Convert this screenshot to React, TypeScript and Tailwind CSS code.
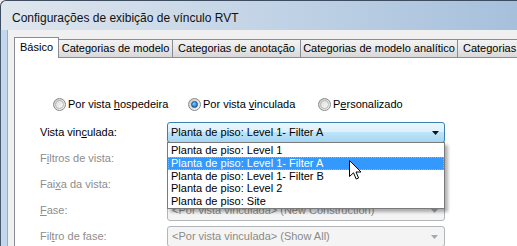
import React from "react";

function Radio({ checked }: { checked?: boolean }) {
  return (
    <span className="w-[13px] h-[13px] rounded-full border border-[#8a8a8a] bg-gradient-to-br from-[#c9c9c9] to-[#f7f7f7] flex items-center justify-center shrink-0">
      {checked ? (
        <span className="w-[7px] h-[7px] rounded-full border border-[#1c4f86] bg-[radial-gradient(circle_at_40%_35%,#8fd0ff_0%,#2f8ad8_55%,#1b5fa5_100%)]" />
      ) : (
        <span className="w-[9px] h-[9px] rounded-full border border-[#b9b9b9] bg-gradient-to-br from-[#dcdcdc] to-[#fafafa]" />
      )}
    </span>
  );
}

function Arrow({ color }: { color: string }) {
  return (
    <svg width="7" height="4" viewBox="0 0 7 4" className="shrink-0">
      <path d="M0 0 H7 L3.5 4 Z" fill={color} />
    </svg>
  );
}

function DisabledCombo({ text }: { text?: string }) {
  return (
    <div className="w-[278px] h-[21px] rounded-[3px] border border-[#b3b6b9] bg-[#f4f4f4] flex items-center pl-[4px] pr-[6px] text-[#8a8a8a]">
      <span className="flex-1 whitespace-nowrap">{text}</span>
      <Arrow color="#a8a8a8" />
    </div>
  );
}

export default function App() {
  const items = [
    "Planta de piso: Level 1",
    "Planta de piso: Level 1- Filter A",
    "Planta de piso: Level 1- Filter B",
    "Planta de piso: Level 2",
    "Planta de piso: Site",
  ];
  return (
    <div className="w-[517px] h-[246px] overflow-hidden relative flex flex-col bg-[#f0f0f0] font-['Liberation_Sans',Arial,sans-serif] text-[11px] text-black leading-none">
      {/* Title bar */}
      <div className="h-[30px] shrink-0 border-t border-l border-[#3d4c5e] rounded-tl-[6px] bg-gradient-to-r from-[#dfe6ee] via-[#c3d4e6] to-[#a6c0dc] flex items-center pl-[11px] pt-[4px]">
        <span className="text-[12px] text-[#111] whitespace-nowrap">
          Configurações de exibição de vínculo RVT
        </span>
      </div>
      <div className="flex flex-1 min-h-0">
        {/* left frame */}
        <div className="w-[8px] shrink-0 flex">
          <div className="w-[1px] bg-[#4a5a6e]" />
          <div className="w-[6px] bg-[#c2d7ec]" />
          <div className="w-[1px] bg-[#a7a9ac]" />
        </div>
        {/* client */}
        <div className="flex-1 flex flex-col pl-[6px] pt-[7px] bg-[#f0f0f0] min-w-0">
          {/* tabs */}
          <div className="flex items-end h-[21px] shrink-0 relative z-10 whitespace-nowrap">
            <div className="w-[45px] h-[21px] border border-b-0 border-[#898c95] bg-white flex items-center justify-center pb-[1px] shrink-0">
              Básico
            </div>
            <div className="w-[114px] h-[18px] border-t border-r border-[#898c95] bg-gradient-to-b from-[#f3f3f3] via-[#e8e8e8] to-[#d8d8d8] flex items-center justify-center shrink-0 mb-[1px]">
              Categorias de modelo
            </div>
            <div className="w-[128px] h-[18px] border-t border-r border-[#898c95] bg-gradient-to-b from-[#f3f3f3] via-[#e8e8e8] to-[#d8d8d8] flex items-center justify-center shrink-0 mb-[1px]">
              Categorias de anotação
            </div>
            <div className="w-[157px] h-[18px] border-t border-r border-[#898c95] bg-gradient-to-b from-[#f3f3f3] via-[#e8e8e8] to-[#d8d8d8] flex items-center justify-center shrink-0 mb-[1px]">
              Categorias de modelo analítico
            </div>
            <div className="w-[80px] h-[18px] border-t border-[#898c95] bg-gradient-to-b from-[#f3f3f3] via-[#e8e8e8] to-[#d8d8d8] flex items-center pl-[5px] shrink-0 mb-[1px]">
              Categorias
            </div>
          </div>
          {/* panel */}
          <div className="flex-1 -mt-[1px] border-t border-l border-[#898c95] bg-white pl-[25px] pt-[40px] flex flex-col relative whitespace-nowrap">
            {/* radios */}
            <div className="flex items-center h-[13px] pl-[13px]">
              <div className="w-[135px] flex items-center gap-[2px]">
                <Radio />
                <span>
                  Por vista <span className="underline">h</span>ospedeira
                </span>
              </div>
              <div className="w-[130px] flex items-center gap-[2px]">
                <Radio checked />
                <span>
                  Por vista <span className="underline">v</span>inculada
                </span>
              </div>
              <div className="flex items-center gap-[2px]">
                <Radio />
                <span>
                  P<span className="underline">e</span>rsonalizado
                </span>
              </div>
            </div>
            {/* rows */}
            <div className="flex flex-col gap-[5px] mt-[11px]">
              <div className="flex items-center h-[21px]">
                <span className="w-[127px]">
                  Vista vin<span className="underline">c</span>ulada:
                </span>
                <div className="w-[278px] h-[21px] rounded-[3px] border border-[#3c7fb1] bg-[linear-gradient(to_bottom,#ecf7fd_0%,#dcf0fb_45%,#bde4f8_50%,#a5d6f3_100%)] flex items-center pl-[3px] pr-[5px]">
                  <span className="flex-1">Planta de piso: Level 1- Filter A</span>
                  <Arrow color="#111" />
                </div>
              </div>
              <div className="flex items-center h-[21px] text-[#8d8d8d]">
                <span className="w-[127px]">
                  F<span className="underline">i</span>ltros de vista:
                </span>
                <DisabledCombo />
              </div>
              <div className="flex items-center h-[21px] text-[#8d8d8d]">
                <span className="w-[127px]">
                  Fai<span className="underline">x</span>a da vista:
                </span>
                <DisabledCombo />
              </div>
              <div className="flex items-center h-[21px] text-[#8d8d8d]">
                <span className="w-[127px]">
                  <span className="underline">F</span>ase:
                </span>
                <DisabledCombo text="<Por vista vinculada> (New Construction)" />
              </div>
              <div className="flex items-center h-[21px] text-[#8d8d8d]">
                <span className="w-[127px]">
                  Fil<span className="underline">t</span>ro de fase:
                </span>
                <DisabledCombo text="<Por vista vinculada> (Show All)" />
              </div>
            </div>
          </div>
        </div>
      </div>

      {/* dropdown list overlay */}
      <div className="absolute left-[167px] top-[142px] w-[278px] h-[67px] bg-white border border-[#7a7a7a] shadow-[3px_3px_3px_rgba(0,0,0,0.3)] flex flex-col pt-[1px] whitespace-nowrap">
        {items.map((t, i) =>
          i === 1 ? (
            <div
              key={t}
              className="h-[13px] bg-[#3399ff] text-white border border-dotted border-[#f0a040] flex items-center pl-[2px]"
            >
              {t}
            </div>
          ) : (
            <div key={t} className="h-[13px] flex items-center pl-[3px]">
              {t}
            </div>
          )
        )}
      </div>

      {/* mouse cursor */}
      <svg
        className="absolute left-[349px] top-[160px]"
        width="13"
        height="21"
        viewBox="0 0 13 21"
      >
        <path
          d="M0.5 0.5 L0.5 16.5 L4.5 12.8 L7.2 19 L9.6 18 L7 12 L12 12 Z"
          fill="white"
          stroke="black"
          strokeWidth="1"
          strokeLinejoin="miter"
        />
      </svg>
    </div>
  );
}
